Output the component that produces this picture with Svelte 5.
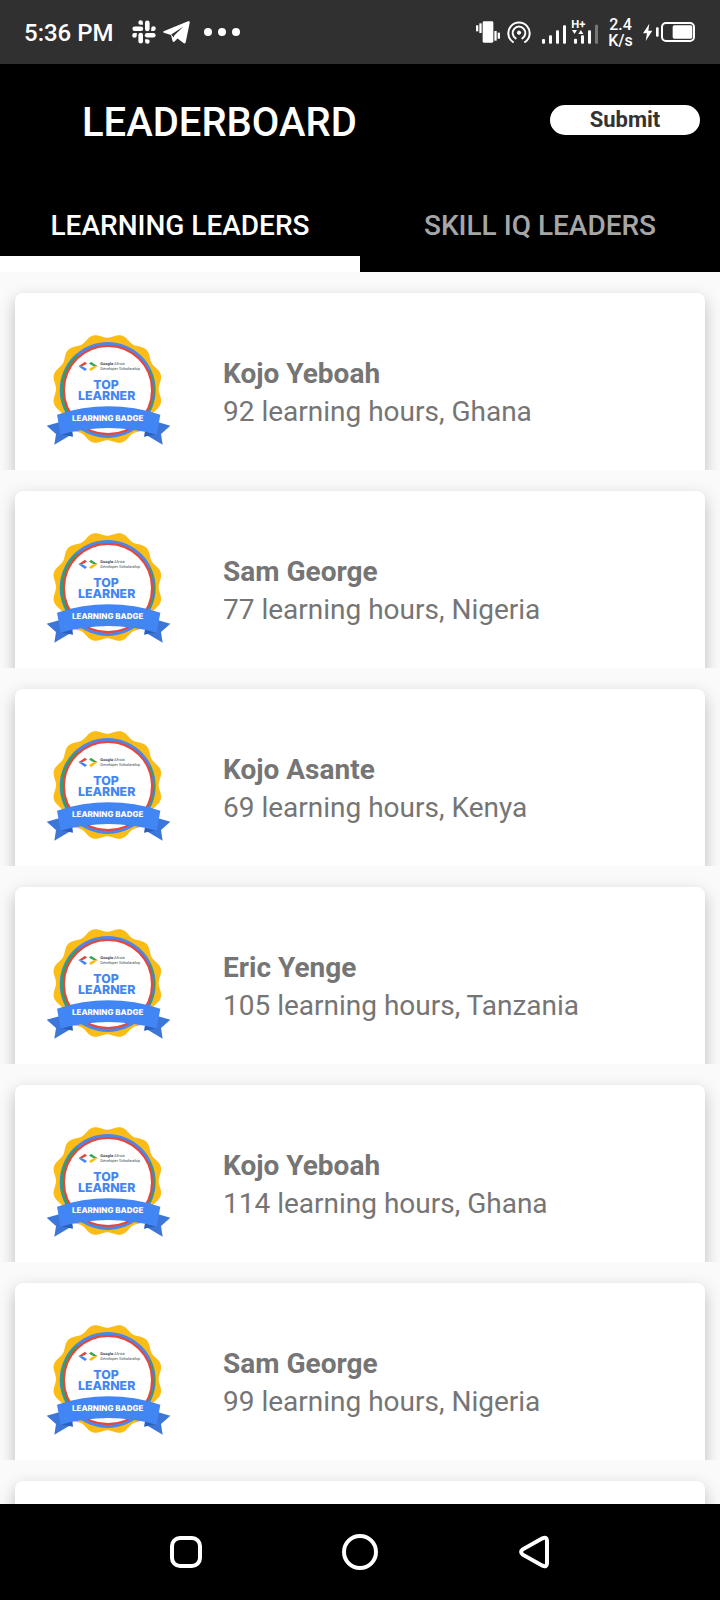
<script>
  const leaders = [
    { name: 'Kojo Yeboah', hours: 92, country: 'Ghana' },
    { name: 'Sam George', hours: 77, country: 'Nigeria' },
    { name: 'Kojo Asante', hours: 69, country: 'Kenya' },
    { name: 'Eric Yenge', hours: 105, country: 'Tanzania' },
    { name: 'Kojo Yeboah', hours: 114, country: 'Ghana' },
    { name: 'Sam George', hours: 99, country: 'Nigeria' }
  ];

  const tabs = ['LEARNING LEADERS', 'SKILL IQ LEADERS'];
  let active = $state(0);

  // Scalloped seal outline: twelve soft lobes around the centre.
  const lobes = 12;
  const seal =
    'M' +
    Array.from({ length: 320 }, (_, i) => {
      const a = (i / 320) * Math.PI * 2;
      const r = 160 - 6 * Math.cos(lobes * a);
      return `${(202 + r * Math.sin(a)).toFixed(1)} ${(207 - r * Math.cos(a)).toFixed(1)}`;
    }).join('L') +
    'Z';
</script>

<div class="screen">
  <div class="status">
    <div class="left">
      <span class="time">5:36 PM</span>
      <svg class="slack" width="24" height="24" viewBox="0 0 24 24" fill="#fff" aria-hidden="true">
        {#each [0, 90, 180, 270] as turn}
          <g transform="rotate({turn} 12 12)">
            <rect x="6.4" y="0.4" width="4.6" height="10.8" rx="2.3" transform="translate(6.6 0)" />
            <path d="M6.3 2.5a2.3 2.3 0 0 1 4.6 0v2.3H8.6A2.3 2.3 0 0 1 6.3 2.5z" />
          </g>
        {/each}
      </svg>
      <svg class="plane" width="27" height="24" viewBox="0 0 27 24" fill="#fff" aria-hidden="true">
        <path d="M.7 11.3 25 1.3c1.200-.5 2 .1 1.700 1.500l-4 19.400c-.3 1.200-1.200 1.500-2.200.9l-6-4.500-3 2.900c-.9.900-1.700.5-1.900-.6L8 14.900.8 12.700c-.8-.3-.8-1-.1-1.400z" />
        <path d="M8.200 14.600 20.500 6.500 11.200 15.600 10.600 17.500z" fill="#303030" />
      </svg>
      <svg width="36" height="24" viewBox="0 0 36 24" fill="#fff" aria-hidden="true">
        <circle cx="4" cy="12" r="4" /><circle cx="18" cy="12" r="4" /><circle cx="32" cy="12" r="4" />
      </svg>
    </div>
    <div class="right">
      <svg width="24" height="24" viewBox="0 0 72 72" fill="#fff" aria-hidden="true">
        <rect x="20" y="4" width="32" height="64" rx="4" />
        <rect x="0" y="16" width="7" height="18" /><rect x="10" y="10" width="7" height="29" />
        <rect x="55" y="33" width="7" height="29" /><rect x="65" y="38" width="7" height="18" />
      </svg>
      <svg class="hotspot" width="24" height="24" viewBox="0 0 72 72" fill="none" stroke="#fff" stroke-width="6" stroke-linecap="round" aria-hidden="true">
        <circle cx="36" cy="38" r="5" fill="#fff" stroke-width="3" />
        <path d="M26 55a19 19 0 1 1 20 0" />
        <path d="M18 66a32 32 0 1 1 36 0" />
      </svg>
      <svg class="signal" width="56" height="26" viewBox="0 0 168 78" fill="#fff" aria-hidden="true">
        <rect y="60" width="9" height="14" rx="3" /><rect x="21" y="49" width="9" height="25" rx="3" />
        <rect x="42" y="34" width="9" height="40" rx="3" /><rect x="63" y="19" width="9" height="55" rx="3" />
        <text x="88" y="28" font-size="34" font-weight="700">H+</text>
        <path d="M90 33h15l-7.500 12zM109 45h15l-7.500-12z" />
        <rect x="96" y="59" width="9" height="15" rx="3" /><rect x="117" y="49" width="9" height="25" rx="3" />
        <rect x="138" y="34" width="9" height="40" rx="3" /><rect x="159" y="17" width="9" height="57" rx="2" fill="#777" />
      </svg>
      <div class="speed"><span>2.4</span><span>K/s</span></div>
      <svg width="52" height="22" viewBox="0 0 156 66" fill="#fff" aria-hidden="true">
        <path d="M19 8 0 37h12L8 60l20-31H16z" />
        <rect x="39" y="19" width="8" height="28" rx="3" />
        <rect x="57" y="6" width="96" height="54" rx="12" fill="none" stroke="#fff" stroke-width="6" />
        <rect x="89" y="13" width="59" height="40" rx="5" />
      </svg>
    </div>
  </div>

  <header>
    <h1>LEADERBOARD</h1>
    <button class="submit">Submit</button>
  </header>

  <nav class="tabs">
    {#each tabs as tab, i}
      <button class:active={active === i} onclick={() => (active = i)}>{tab}</button>
    {/each}
  </nav>

  <ul>
    {#each leaders as leader}
      <li>
        <div class="card">
          <svg class="badge" viewBox="0 0 420 405" aria-hidden="true">
            <path d={seal} fill="#fbbc15" />
            <circle cx="203" cy="210" r="144" fill="#4b86e8" />
            <path d="M113 107A136 136 0 0 0 113 313" fill="none" stroke="#34a060" stroke-width="8" />
            <path d="M329 150A139 139 0 0 1 329 270" fill="none" stroke="#34a060" stroke-width="5" />
            <circle cx="204" cy="210" r="132" fill="#fff" stroke="#e8453c" stroke-width="6" />
            <path d="M115 139 135 125 141 131 127 139z" fill="#ea4335" />
            <path d="M115 139H127L141 147 135 153z" fill="#4285f4" />
            <path d="M173 139 153 125 147 131 161 139z" fill="#34a853" />
            <path d="M173 139H161L147 147 153 153z" fill="#fbbc04" />
            <text font-size="12" fill="#444">
              <tspan x="181" y="135" font-weight="700">Google</tspan> Africa
              <tspan x="181" y="149">Developer Scholarship</tspan>
            </text>
            <text class="heading" fill="#4285f4" text-anchor="middle" font-size="37">
              <tspan x="202" y="206">TOP</tspan>
              <tspan x="200" y="239">LEARNER</tspan>
            </text>
            <path d="M20 317 60 306 92 345 43 374 48 342z" fill="#3b76d8" />
            <path d="M391 317 352 306 319 345 368 374 363 342z" fill="#3b76d8" />
            <path d="M62 343 99 350 97 333z M350 343 312 350 315 333z" fill="#2c5fb8" />
            <path d="M51 284Q205 234 361 284L350 344Q205 304 62 344z" fill="#4285f4" />
            <text class="heading" x="203" y="304" font-size="24" text-anchor="middle" fill="#fff">LEARNING BADGE</text>
          </svg>
          <div class="info">
            <strong>{leader.name}</strong>
            <span>{leader.hours} learning hours, {leader.country}</span>
          </div>
        </div>
      </li>
    {/each}
    <li aria-hidden="true"><div class="card"></div></li>
  </ul>

  <nav class="system">
    <button aria-label="Recent apps">
      <svg width="36" height="36" viewBox="0 0 36 36"><rect x="4" y="4" width="28" height="28" rx="8" /></svg>
    </button>
    <button aria-label="Home">
      <svg width="36" height="36" viewBox="0 0 36 36"><circle cx="18" cy="18" r="16" /></svg>
    </button>
    <button aria-label="Back">
      <svg width="36" height="36" viewBox="0 0 36 36"><path d="M26.500 4.300 6.800 15.300Q3.500 18 6.800 20.700L26.500 31.700Q31 33.500 31 29V7Q31 2.500 26.500 4.300z" /></svg>
    </button>
  </nav>
</div>

<style>
  :global(body) {
    background: #fafafa;
  }
  .screen {
    display: flex;
    flex-direction: column;
    height: 100vh;
    font-family: Roboto, sans-serif;
    background: #fafafa;
  }
  button {
    border: 0;
    padding: 0;
    font: inherit;
    background: none;
    cursor: pointer;
  }
  svg {
    display: block;
    flex: none;
    text-rendering: geometricPrecision;
  }
  .status {
    display: flex;
    justify-content: space-between;
    align-items: center;
    height: 64px;
    flex: none;
    padding: 0 25px 0 24px;
    box-sizing: border-box;
    color: #fff;
    background: #303030;
  }
  .left,
  .right {
    display: flex;
    align-items: center;
  }
  .time {
    margin-right: 18px;
    padding-top: 2px;
    font-size: 24px;
    font-weight: 500;
    line-height: 28px;
  }
  .slack {
    margin-right: 7px;
  }
  .plane {
    margin-right: 14px;
  }
  .right {
    gap: 10px;
  }
  .hotspot {
    margin: 0 1px 0 -3px;
  }
  .speed {
    display: flex;
    flex-direction: column;
    align-items: center;
    width: 25px;
    padding-top: 2px;
    font-size: 16px;
    font-weight: 500;
    line-height: 16px;
  }
  header {
    display: flex;
    justify-content: space-between;
    align-items: center;
    flex: none;
    height: 112px;
    padding: 0 20px 0 82px;
    box-sizing: border-box;
    color: #fff;
    background: #000;
  }
  h1 {
    margin: 6px 0 0;
    font-size: 40px;
    font-weight: 500;
    line-height: 48px;
  }
  .submit {
    width: 150px;
    height: 30px;
    border-radius: 15px;
    font-size: 22px;
    font-weight: 700;
    line-height: 30px;
    color: #333;
    background: #fff;
  }
  .tabs {
    display: grid;
    grid-template-columns: 1fr 1fr;
    flex: none;
    height: 96px;
    background: #000;
  }
  .tabs button {
    font-size: 28px;
    font-weight: 500;
    padding-top: 18px;
    border-bottom: 16px solid transparent;
    color: #a6a6a6;
  }
  .tabs .active {
    color: #fff;
    border-color: #fff;
  }
  ul {
    flex: 1;
    min-height: 0;
    margin: 0;
    padding: 0;
    overflow-y: auto;
    scrollbar-width: none;
    list-style: none;
  }
  li {
    padding: 21px 15px 0;
    overflow: hidden;
  }
  .card {
    display: flex;
    align-items: center;
    gap: 43px;
    min-height: 135px;
    margin-bottom: -24px;
    padding: 27px 25px 39px;
    border-radius: 8px;
    background: #fff;
    box-shadow: 0 6px 16px rgba(0, 0, 0, 0.25);
  }
  .badge {
    width: 140px;
    height: 135px;
  }
  .heading {
    font-family: Inter, Roboto, sans-serif;
    font-weight: 800;
  }
  .info {
    display: flex;
    flex-direction: column;
    min-width: 0;
    margin-top: 10px;
    font-size: 28px;
    line-height: 38px;
    color: #757575;
  }
  .system {
    display: grid;
    grid-template-columns: repeat(3, 1fr);
    flex: none;
    height: 96px;
    padding: 0 99px;
    background: #000;
  }
  .system button {
    display: grid;
    place-items: center;
  }
  .system svg {
    fill: none;
    stroke: #fff;
    stroke-width: 4;
  }
</style>
